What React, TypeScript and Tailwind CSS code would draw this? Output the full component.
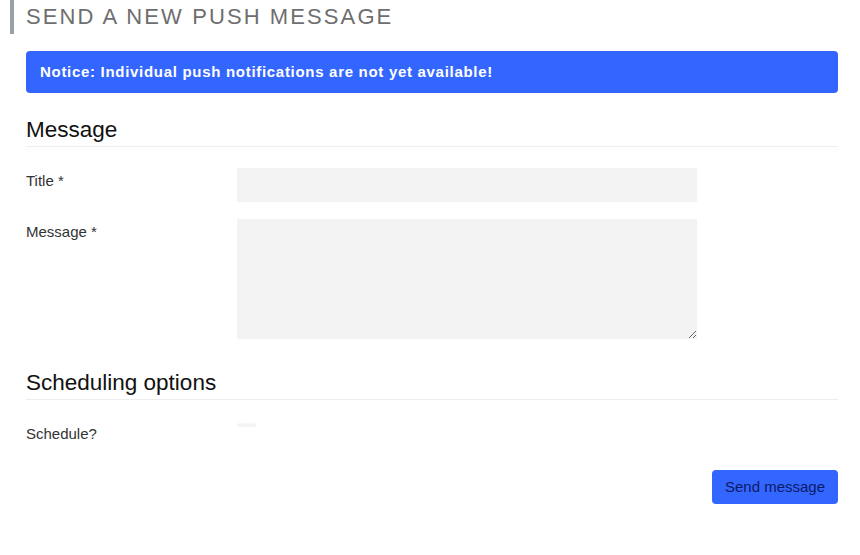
import React, { useState } from 'react';

const font = { fontFamily: '"Liberation Sans", Arial, sans-serif' };

export default function App() {
  const [title, setTitle] = useState('');
  const [message, setMessage] = useState('');
  const [schedule, setSchedule] = useState(false);

  return (
    <div className="min-h-[555px] w-full bg-white text-[#333]" style={font}>
      {/* page heading */}
      <div className="ml-[10px] border-l-4 border-[#9aa0a6] pl-[12px]">
        <h1 className="text-[22px] leading-[34px] uppercase tracking-[2.1px] text-[#6e6e6e]">
          Send a new push message
        </h1>
      </div>

      <div className="px-[22px] pl-[26px]">
        <div className="mt-[17px] h-[42px] rounded-[4px] bg-[#3366ff] px-[14px] flex items-center">
          <p className="text-[15px] font-bold tracking-[0.7px] text-white">
            Notice: Individual push notifications are not yet available!
          </p>
        </div>

        {/* Message section */}
        <h2 className="mt-[23px] pb-[2px] border-b border-[#eeeeee] text-[22.5px] leading-[28px] text-[#111]">
          Message
        </h2>

        <div className="mt-[21px] flex">
          <label className="w-[211px] pt-[3px] text-[15px] leading-[20px]">Title *</label>
          <input
            value={title}
            onChange={e => setTitle(e.target.value)}
            className="w-[460px] h-[34px] bg-[#f3f3f3] px-2 text-[15px] outline-none"
          />
        </div>

        <div className="mt-[17px] flex">
          <label className="w-[211px] pt-[3px] text-[15px] leading-[20px]">Message *</label>
          <textarea
            value={message}
            onChange={e => setMessage(e.target.value)}
            className="block w-[460px] h-[120px] bg-[#f3f3f3] px-2 py-1 text-[15px] outline-none resize-y"
          />
        </div>

        {/* Scheduling section */}
        <h2 className="mt-[30px] pb-[2px] border-b border-[#eeeeee] text-[22.5px] leading-[28px] text-[#111]">
          Scheduling options
        </h2>

        <div className="mt-[21px] flex">
          <label className="w-[211px] pt-[3px] text-[15px] leading-[20px]">Schedule?</label>
          <button
            onClick={() => setSchedule(s => !s)}
            className={`mt-[3px] w-[19px] h-[3px] rounded-t-[2px] shadow-[0_-1px_2px_rgba(0,0,0,0.04)] ${schedule ? 'bg-[#3366ff]' : 'bg-[#f4f4f4]'}`}
          />
        </div>

        <div className="mt-[26px] flex justify-end">
          <button className="h-[34px] w-[126px] rounded-[4px] bg-[#3366ff] text-[15px] text-[#0b1a66]">
            Send message
          </button>
        </div>
      </div>
    </div>
  );
}
